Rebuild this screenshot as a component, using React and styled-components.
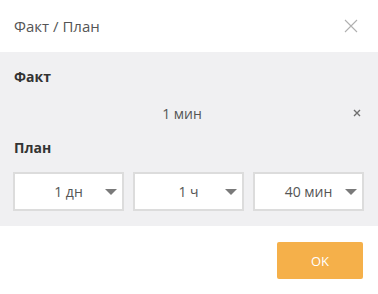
import React from 'react';
import styled, { createGlobalStyle } from 'styled-components';

const Global = createGlobalStyle`
    html, body {
        margin: 0;
        padding: 0;
        background: #fff;
        font-family: "Open Sans", "Noto Sans", sans-serif;
    }
`

const Dialog = styled.div`
    width: 378px;
    height: 294px;
    display: flex;
    flex-direction: column;
    background: #fff;
`

const Header = styled.div`
    height: 52px;
    display: flex;
    align-items: center;
    justify-content: space-between;
    padding: 0 20px 0 14px;
    box-sizing: border-box;
`

const Title = styled.h2`
    margin: 0;
    font-size: 15px;
    font-weight: 400;
    color: #555;
`

const CloseButton = styled.button`
    border: 0;
    background: none;
    padding: 0;
    width: 14px;
    height: 14px;
    display: flex;
    cursor: pointer;
`

const Body = styled.div`
    background: #f0f0f2;
    padding: 15px 14px 15px 13px;
    display: flex;
    flex-direction: column;
`

const Label = styled.div`
    font-size: 14px;
    font-weight: 700;
    color: #333;
    line-height: 20px;
    padding-left: 1px;
`

const ValueRow = styled.div`
    display: grid;
    grid-template-columns: 1fr auto 1fr;
    align-items: center;
    height: 40px;
    margin: 6px 0 5px;
    padding-right: 13px;
    font-size: 14px;
    color: #555;
`

const Clear = styled.button`
    justify-self: end;
    border: 0;
    background: none;
    padding: 0;
    margin-right: -10px;
    display: flex;
    cursor: pointer;
`

const Selects = styled.div`
    display: grid;
    grid-template-columns: repeat(3, 111px);
    gap: 9px;
    margin-top: 14px;
`

const Select = styled.div`
    height: 39px;
    box-sizing: border-box;
    background: #fff;
    border: 2px solid #dcdcdc;
    display: grid;
    grid-template-columns: 1fr auto 1fr;
    align-items: center;
    font-size: 14px;
    color: #555;
    padding: 0 5px;
`

const Arrow = styled.span`
    justify-self: end;
    width: 0;
    height: 0;
    border-left: 6.5px solid transparent;
    border-right: 6.5px solid transparent;
    border-top: 6.5px solid #7a7a7a;
`

const Footer = styled.div`
    flex: 1;
    display: flex;
    justify-content: flex-end;
    align-items: flex-start;
    padding: 16px 15px 0 0;
`

const OkButton = styled.button`
    width: 86px;
    height: 37px;
    border: 0;
    border-radius: 2px;
    background: #f5b04a;
    color: #fff;
    font-family: inherit;
    font-size: 13px;
    cursor: pointer;
`

const plan = ['1 дн', '1 ч', '40 мин'];

const App = () => {
    return (
        <Dialog>
            <Global />
            <Header>
                <Title>Факт / План</Title>
                <CloseButton>
                    <svg width="14" height="14" viewBox="0 0 14 14">
                        <path d="M1 1L13 13M13 1L1 13" stroke="#b0b0b0" strokeWidth="1.1" />
                    </svg>
                </CloseButton>
            </Header>
            <Body>
                <Label>Факт</Label>
                <ValueRow>
                    <span />
                    <span>1 мин</span>
                    <Clear>
                        <svg width="8" height="8" viewBox="0 0 8 8">
                            <path d="M1 1L7 7M7 1L1 7" stroke="#6e6e6e" strokeWidth="1.4" />
                        </svg>
                    </Clear>
                </ValueRow>
                <Label>План</Label>
                <Selects>
                    {plan.map((p) => (
                        <Select key={p}>
                            <span />
                            <span>{p}</span>
                            <Arrow />
                        </Select>
                    ))}
                </Selects>
            </Body>
            <Footer>
                <OkButton>OK</OkButton>
            </Footer>
        </Dialog>
    );
};

export default App;
